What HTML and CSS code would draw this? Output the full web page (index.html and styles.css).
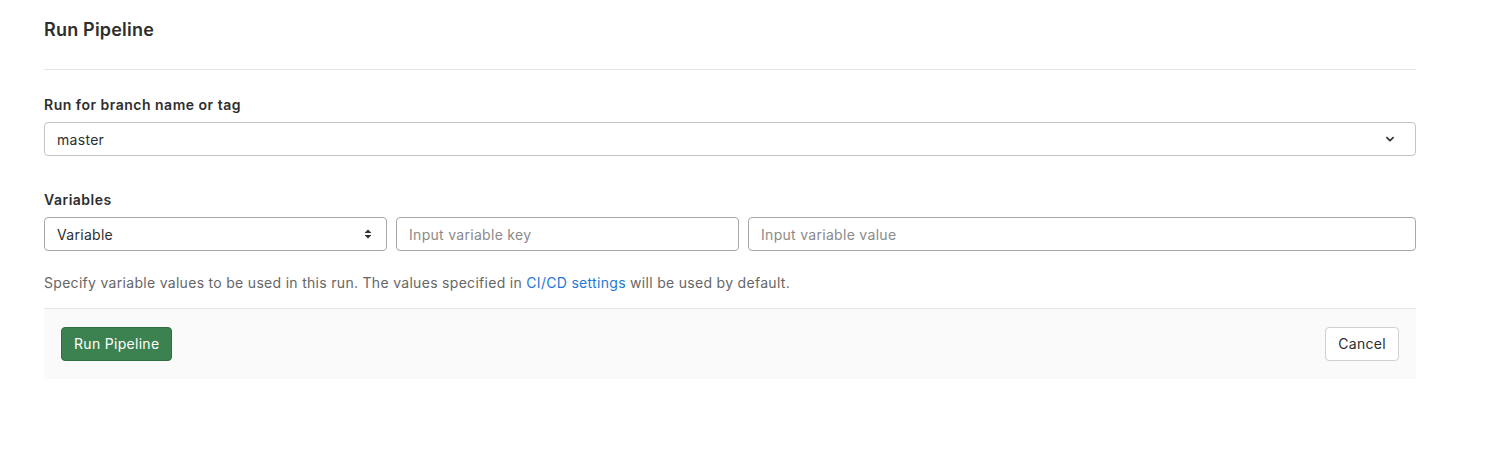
FILE: index.html
```html
<!DOCTYPE html>
<html lang="en">
<head>
<meta charset="utf-8">
<title>Run Pipeline</title>
<link rel="stylesheet" href="styles.css">
</head>
<body>
<div class="page">
  <div class="page-header">
    <h3 class="page-title">Run Pipeline</h3>
  </div>
  <form class="form">
    <div class="form-group">
      <label class="label">Run for branch name or tag</label>
      <div class="dropdown">
        <span class="dropdown-text">master</span>
        <svg class="chevron" width="16" height="16" viewBox="0 0 16 16"><path d="M4.5 6.5 L8 10 L11.5 6.5" fill="none" stroke="#333" stroke-width="2" stroke-linecap="round" stroke-linejoin="round"/></svg>
      </div>
    </div>
    <div class="form-group vars">
      <label class="label">Variables</label>
      <div class="var-row">
        <div class="select">
          <span>Variable</span>
          <svg class="updown" width="10" height="14" viewBox="0 0 10 14"><path d="M1.5 6 L5 2.5 L8.5 6 Z M1.5 8 L5 11.5 L8.5 8 Z" fill="#333"/></svg>
        </div>
        <div class="input"><span class="placeholder">Input variable key</span></div>
        <div class="input wide"><span class="placeholder">Input variable value</span></div>
      </div>
      <p class="help">Specify variable values to be used in this run. The values specified in <a href="#" class="link">CI/CD settings</a> will be used by default.</p>
    </div>
    <div class="form-actions">
      <button type="button" class="btn btn-success">Run Pipeline</button>
      <button type="button" class="btn btn-default">Cancel</button>
    </div>
  </form>
</div>
</body>
</html>
```
FILE: styles.css
```css
* { box-sizing: border-box; }
body {
  margin: 0;
  background: #fff;
  font-family: Inter, "Liberation Sans", Arial, sans-serif;
  font-size: 14px;
  letter-spacing: 0.3px;
  color: #2e2e2e;
}
.page {
  width: 1372px;
  margin-left: 44px;
}
.page-header {
  padding-top: 18px;
  padding-bottom: 27px;
  border-bottom: 1px solid #e5e5e5;
}
.page-title {
  margin: 0;
  font-size: 18px;
  line-height: 24px;
  font-weight: 600;
  letter-spacing: 0.2px;
  color: #2e2e2e;
}
.form-group { margin-top: 24px; }
.form-group.vars { margin-top: 33px; }
.label {
  display: block;
  font-weight: 600;
  line-height: 22px;
  letter-spacing: 0.5px;
  margin-bottom: 6px;
}
.dropdown {
  height: 34px;
  border: 1px solid #c4c4c4;
  border-radius: 4px;
  display: flex;
  align-items: center;
  justify-content: space-between;
  padding: 0 18px 0 12px;
}
.chevron { display: block; width: 14px; height: 14px; }
.var-row {
  display: flex;
  gap: 9px;
  height: 34px;
}
.select {
  width: 343px;
  border: 1px solid #a8a8a8;
  border-radius: 4px;
  display: flex;
  align-items: center;
  justify-content: space-between;
  padding: 0 13px 0 12px;
}
.updown { display: block; }
.input {
  width: 343px;
  border: 1px solid #a8a8a8;
  border-radius: 4px;
  display: flex;
  align-items: center;
  padding: 0 12px;
}
.input.wide { flex: 1; }
.placeholder { color: #8a8a8a; }
.help {
  margin: 22px 0 15px;
  line-height: 20px;
  color: #666;
}
.link { color: #1f78d1; text-decoration: none; }
.form-actions {
  background: #fafafa;
  border-top: 1px solid #e5e5e5;
  padding: 18px 17px;
  display: flex;
  justify-content: space-between;
}
.btn {
  height: 34px;
  padding: 0 12px;
  border-radius: 4px;
  font-family: inherit;
  font-size: 14px;
  letter-spacing: 0.3px;
  line-height: 20px;
}
.btn-success {
  background: #3b8250;
  border: 1px solid #2f6d42;
  color: #fff;
}
.btn-default {
  background: #fff;
  border: 1px solid #d0d0d0;
  color: #2e2e2e;
}
```
